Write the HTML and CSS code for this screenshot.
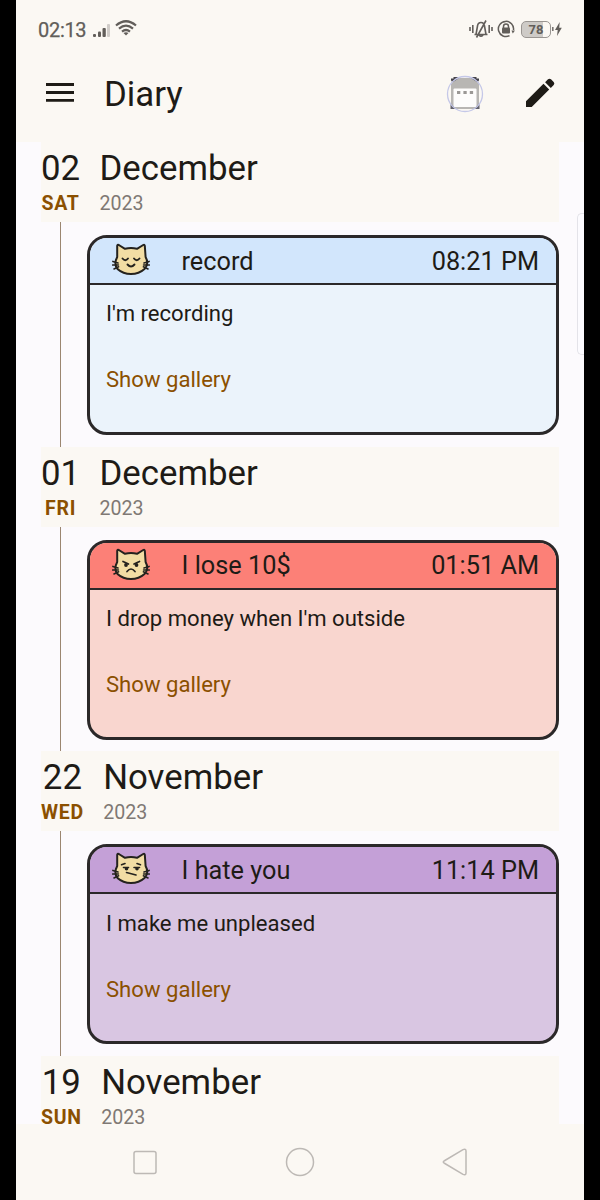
FILE: index.html
```html
<!DOCTYPE html>
<html lang="en">
<head>
<meta charset="utf-8">
<title>Diary</title>
<link rel="stylesheet" href="styles.css">
</head>
<body>
<svg class="defs" aria-hidden="true">
  <defs>
    <g id="cat">
      <path d="M5.200 14V2.800Q5.300 1.200 6.800 2L13 5.800Q19 4.400 25 5.800L31.200 2Q32.600 1.200 32.800 2.800L33.600 14Q37.400 21 32.500 26Q27 31 19 31Q11 31 5.500 26Q1.500 21 5.200 14Z" fill="#f2dda4" stroke="#24221e" stroke-width="2" stroke-linejoin="round"/>
      <path d="M.9 18.400L6 20M.6 22L6.400 22M2 26L6.600 23.800M37.100 18.400L32 20M37.400 22L31.600 22M36 26L31.400 23.800" fill="none" stroke="#24221e" stroke-width="1.600" stroke-linecap="round"/>
    </g>
  </defs>
</svg>
<div class="phone">
  <header class="status">
    <span class="clock">02:13</span>
    <svg class="signal" width="18" height="15" viewBox="0 0 18 15"><g fill="#625e5a"><rect x="0" y="11" width="3" height="3" rx="1"/><rect x="5" y="8.500" width="3" height="5.500" rx="1"/><rect x="9.500" y="5" width="3.300" height="9" rx="1"/></g><rect x="14" y="1" width="3" height="13" rx="1" fill="#d0ccc8"/></svg>
    <svg class="wifi" width="22" height="16" viewBox="0 0 22 16"><g fill="none" stroke="#625e5a" stroke-width="2.200"><path d="M1 5.500Q11-3 21 5.500M4 8.700Q11 2.700 18 8.700M7 11.700Q11 8.300 15 11.700"/></g><path d="M8.500 13Q11 11.400 13.500 13L11 15.500Z" fill="#625e5a"/></svg>
    <div class="status-right">
      <svg width="24" height="20" viewBox="0 0 24 20"><g fill="none" stroke="#625e5a" stroke-width="1.600"><path d="M1 8V12M3.800 6V14M20.200 6V14M23 8V12M5.500 15.500H18.500M7 15.500L8.500 7Q9 3.500 12 3.500Q15 3.500 15.500 7L17 15.500M10 16Q12 18.500 14 16M7.500 18.500L17 1.500"/></g></svg>
      <svg class="lock" width="18" height="18" viewBox="0 0 18 18"><g fill="none" stroke="#625e5a"><path d="M12.500 15.700A7.600 7.600 0 1 1 16.500 10" stroke-width="1.500"/><path d="M6.500 8V6.500a2.500 2.500 0 0 1 5 0V8" stroke-width="1.500"/></g><rect x="5" y="7.500" width="8" height="6" rx="1" fill="#625e5a"/><path d="M14.500 10.500H18L15.800 13.500Z" fill="#625e5a"/></svg>
      <span class="battery">78</span>
      <svg class="charge" width="11" height="16" viewBox="0 0 11 16"><path d="M.8 6V10" stroke="#777370" stroke-width="1.600"/><path d="M7.700 1L3 9H5.700L5 15L9.800 6.800H7.200Z" fill="#625e5a"/></svg>
    </div>
  </header>
  <div class="appbar">
    <svg class="menu" width="30" height="22" viewBox="0 0 30 22"><path d="M1 2.500H29M1 10.500H29M1 18.300H29" stroke="#1e1b16" stroke-width="2.800"/></svg>
    <h1>Diary</h1>
    <svg class="calendar" width="38" height="38" viewBox="0 0 38 38">
      <path d="M5 7L9 3H29L33 7V34H5Z" fill="#b8b6b3"/>
      <path d="M5 5.500V3.500H7.500V2H12.500V3.500L7 7ZM25.500 3.500V2H30.500V3.500H33V5.500L31 7Z" fill="#45434a"/>
      <path d="M4.500 28L10 34H4.500ZM33.500 28L28 34H33.500Z" fill="#62616b"/>
      <rect x="7.500" y="13.500" width="23" height="18.500" rx="1" fill="#fdfcfb"/>
      <path d="M11 17.500H14.300M17.400 17.500H20.700M23.800 17.500H27.100" stroke="#9b9895" stroke-width="3.200"/>
      <circle cx="19" cy="19" r="17.500" fill="none" stroke="#c5c8e8" stroke-width="1.300"/>
    </svg>
    <svg class="pencil" width="30" height="30" viewBox="0 0 30 30"><path d="M1 23.300L18.500 5.800L24.200 11.500L6.700 29H1ZM20.100 4.200L23 1.300Q24.500 0 26 1.300L28.700 4Q30 5.500 28.700 7L25.800 9.900Z" fill="#1e1b16"/></svg>
  </div>
  <main class="timeline">
    <section class="entry">
      <div class="date"><span class="day">02</span><span class="month">December</span><span class="weekday">SAT</span><span class="year">2023</span></div>
      <div class="track">
        <article class="card blue">
          <div class="card-head"><svg class="face" width="38" height="34" viewBox="0 0 38 34"><use href="#cat"/><path d="M10.500 15.500Q13.300 19 16 15.500M22 15.500Q24.700 19 27.500 15.500M15.500 21.500Q19 25.500 22.500 21.500" fill="none" stroke="#24221e" stroke-width="1.900" stroke-linecap="round"/></svg><h2>record</h2><time>08:21 PM</time></div>
          <div class="card-body"><p>I'm recording</p><a class="gallery">Show gallery</a></div>
        </article>
      </div>
    </section>
    <section class="entry">
      <div class="date"><span class="day">01</span><span class="month">December</span><span class="weekday">FRI</span><span class="year">2023</span></div>
      <div class="track">
        <article class="card red">
          <div class="card-head"><svg class="face" width="38" height="34" viewBox="0 0 38 34"><use href="#cat"/><path d="M11 13.500L16.500 16M27.500 13.500L22 16M15 23.500Q19 18.500 23 23.500" fill="none" stroke="#24221e" stroke-width="1.700" stroke-linecap="round"/><circle cx="14" cy="17" r="1.900" fill="#24221e"/><circle cx="24.500" cy="17" r="1.900" fill="#24221e"/></svg><h2>I lose 10$</h2><time>01:51 AM</time></div>
          <div class="card-body"><p>I drop money when I'm outside</p><a class="gallery">Show gallery</a></div>
        </article>
      </div>
    </section>
    <section class="entry">
      <div class="date"><span class="day">22</span><span class="month">November</span><span class="weekday">WED</span><span class="year">2023</span></div>
      <div class="track">
        <article class="card purple">
          <div class="card-head"><svg class="face" width="38" height="34" viewBox="0 0 38 34"><use href="#cat"/><path d="M9.500 12.700L13 11.500M25 11.500L28.500 12.700M11.500 15.500H16.500M22 15.500H27.500M14.500 20.500L24 23" fill="none" stroke="#24221e" stroke-width="1.600" stroke-linecap="round"/><circle cx="14.500" cy="16.800" r="1.800" fill="#24221e"/><circle cx="25" cy="16.800" r="1.800" fill="#24221e"/></svg><h2>I hate you</h2><time>11:14 PM</time></div>
          <div class="card-body"><p>I make me unpleased</p><a class="gallery">Show gallery</a></div>
        </article>
      </div>
    </section>
    <section class="entry last">
      <div class="date"><span class="day">19</span><span class="month">November</span><span class="weekday">SUN</span><span class="year">2023</span></div>
    </section>
    <div class="scroll-edge"></div>
  </main>
  <nav class="navbar">
    <svg width="28" height="30" viewBox="0 0 28 30"><rect x="3" y="4.500" width="22" height="22" rx="2" fill="none" stroke="#bdb9b5" stroke-width="1.500"/></svg>
    <svg width="30" height="30" viewBox="0 0 30 30"><circle cx="15" cy="15" r="13.500" fill="none" stroke="#bdb9b5" stroke-width="1.500"/></svg>
    <svg width="28" height="30" viewBox="0 0 28 30"><path d="M3 14Q1.500 15 3 16L22 27.400Q25 28.500 25 26V4Q25 1.500 22 2.600Z" fill="none" stroke="#bdb9b5" stroke-width="1.500"/></svg>
  </nav>
</div>
</body>
</html>
```
FILE: styles.css
```css
* { box-sizing: border-box; }
body { margin: 0; background: #000; font-family: Roboto, "Liberation Sans", sans-serif; color: #1e1b16; }
h1, h2, p { margin: 0; font-weight: 400; }
svg { display: block; flex: none; }
.defs { position: absolute; width: 0; height: 0; }
.phone { width: 568px; height: 1200px; margin: 0 auto; background: #fbf8f3; display: flex; flex-direction: column; }
.status { height: 58px; flex: none; display: flex; align-items: center; padding: 0 21px 0 22px; color: #625e5a; }
.clock { font-size: 20px; line-height: 24px; letter-spacing: -0.3px; width: 55px; padding-top: 1px; -webkit-text-stroke: 0.25px #625e5a; }
.signal { margin-top: 2px; }
.wifi { margin: -2px 0 0 4px; }
.status-right { margin-left: auto; display: flex; align-items: center; }
.lock { margin-left: 4px; }
.battery { width: 30px; height: 17px; margin-left: 6px; border: 1.500px solid #999591; border-radius: 5px; background: linear-gradient(90deg, #cecbc7 76%, #fbf8f3 76%); font-size: 13px; line-height: 15px; font-weight: 700; text-align: center; }
.charge { margin-left: 1px; }
.appbar { height: 84px; flex: none; display: flex; align-items: center; padding: 0 29px 14px; }
.appbar h1 { font-size: 34.800px; line-height: 42px; margin-left: 29px; padding-top: 1px; }
.calendar { margin-left: auto; margin-top: 1px; }
.pencil { margin-left: 41px; }
.timeline { position: relative; height: 982px; flex: none; background: #fcfafd; padding: 0 25px; }
.entry { height: 304.700px; }
.entry.last { height: 68px; }
.date { height: 80px; background: #fbf8f3; display: grid; grid-template-columns: auto 1fr; grid-template-rows: 40px 23px; column-gap: 19.400px; padding-top: 6px; }
.day, .month { font-size: 34.800px; line-height: 41px; }
.day, .weekday { text-align: center; }
.weekday { font-size: 19.500px; line-height: 32px; font-weight: 700; color: #8b5000; letter-spacing: 0.700px; }
.year { font-size: 19.600px; line-height: 32px; color: #7f7974; }
.track { height: 224.700px; margin-left: 19px; border-left: 1.500px solid #9b8670; padding: 13px 0 0 26px; }
.card { height: 200px; border: 3px solid #2b2829; border-radius: 20px; overflow: hidden; }
.card-head { height: 47px; border-bottom: 2px solid #2b2829; display: flex; align-items: center; padding: 0 17px 0 22px; font-size: 25.300px; line-height: 30px; }
.face { margin-top: -1px; }
.card-head h2 { font-size: 25.300px; margin-left: 31.500px; padding-top: 2.500px; }
.card-head time { margin-left: auto; padding-top: 2.500px; }
.card-body { display: flex; flex-direction: column; align-items: flex-start; gap: 36px; padding: 13.400px 16px; font-size: 22.100px; line-height: 30px; }
.gallery { color: #8b5000; }
.blue { background: #ebf3fb; }
.blue .card-head { background: #d2e6fc; }
.red { background: #f9d6cf; }
.red .card-head { background: #fc8077; }
.purple { background: #d9c6e2; }
.purple .card-head { background: #c4a0d7; }
.scroll-edge { position: absolute; top: 71px; right: 0; width: 7px; height: 142px; border: 1.500px solid #e4e3e9; border-right: 0; border-radius: 5px 0 0 5px; background: #fcfbff; }
.navbar { height: 76px; flex: none; display: flex; align-items: center; justify-content: space-between; padding: 0 115px; }
```
